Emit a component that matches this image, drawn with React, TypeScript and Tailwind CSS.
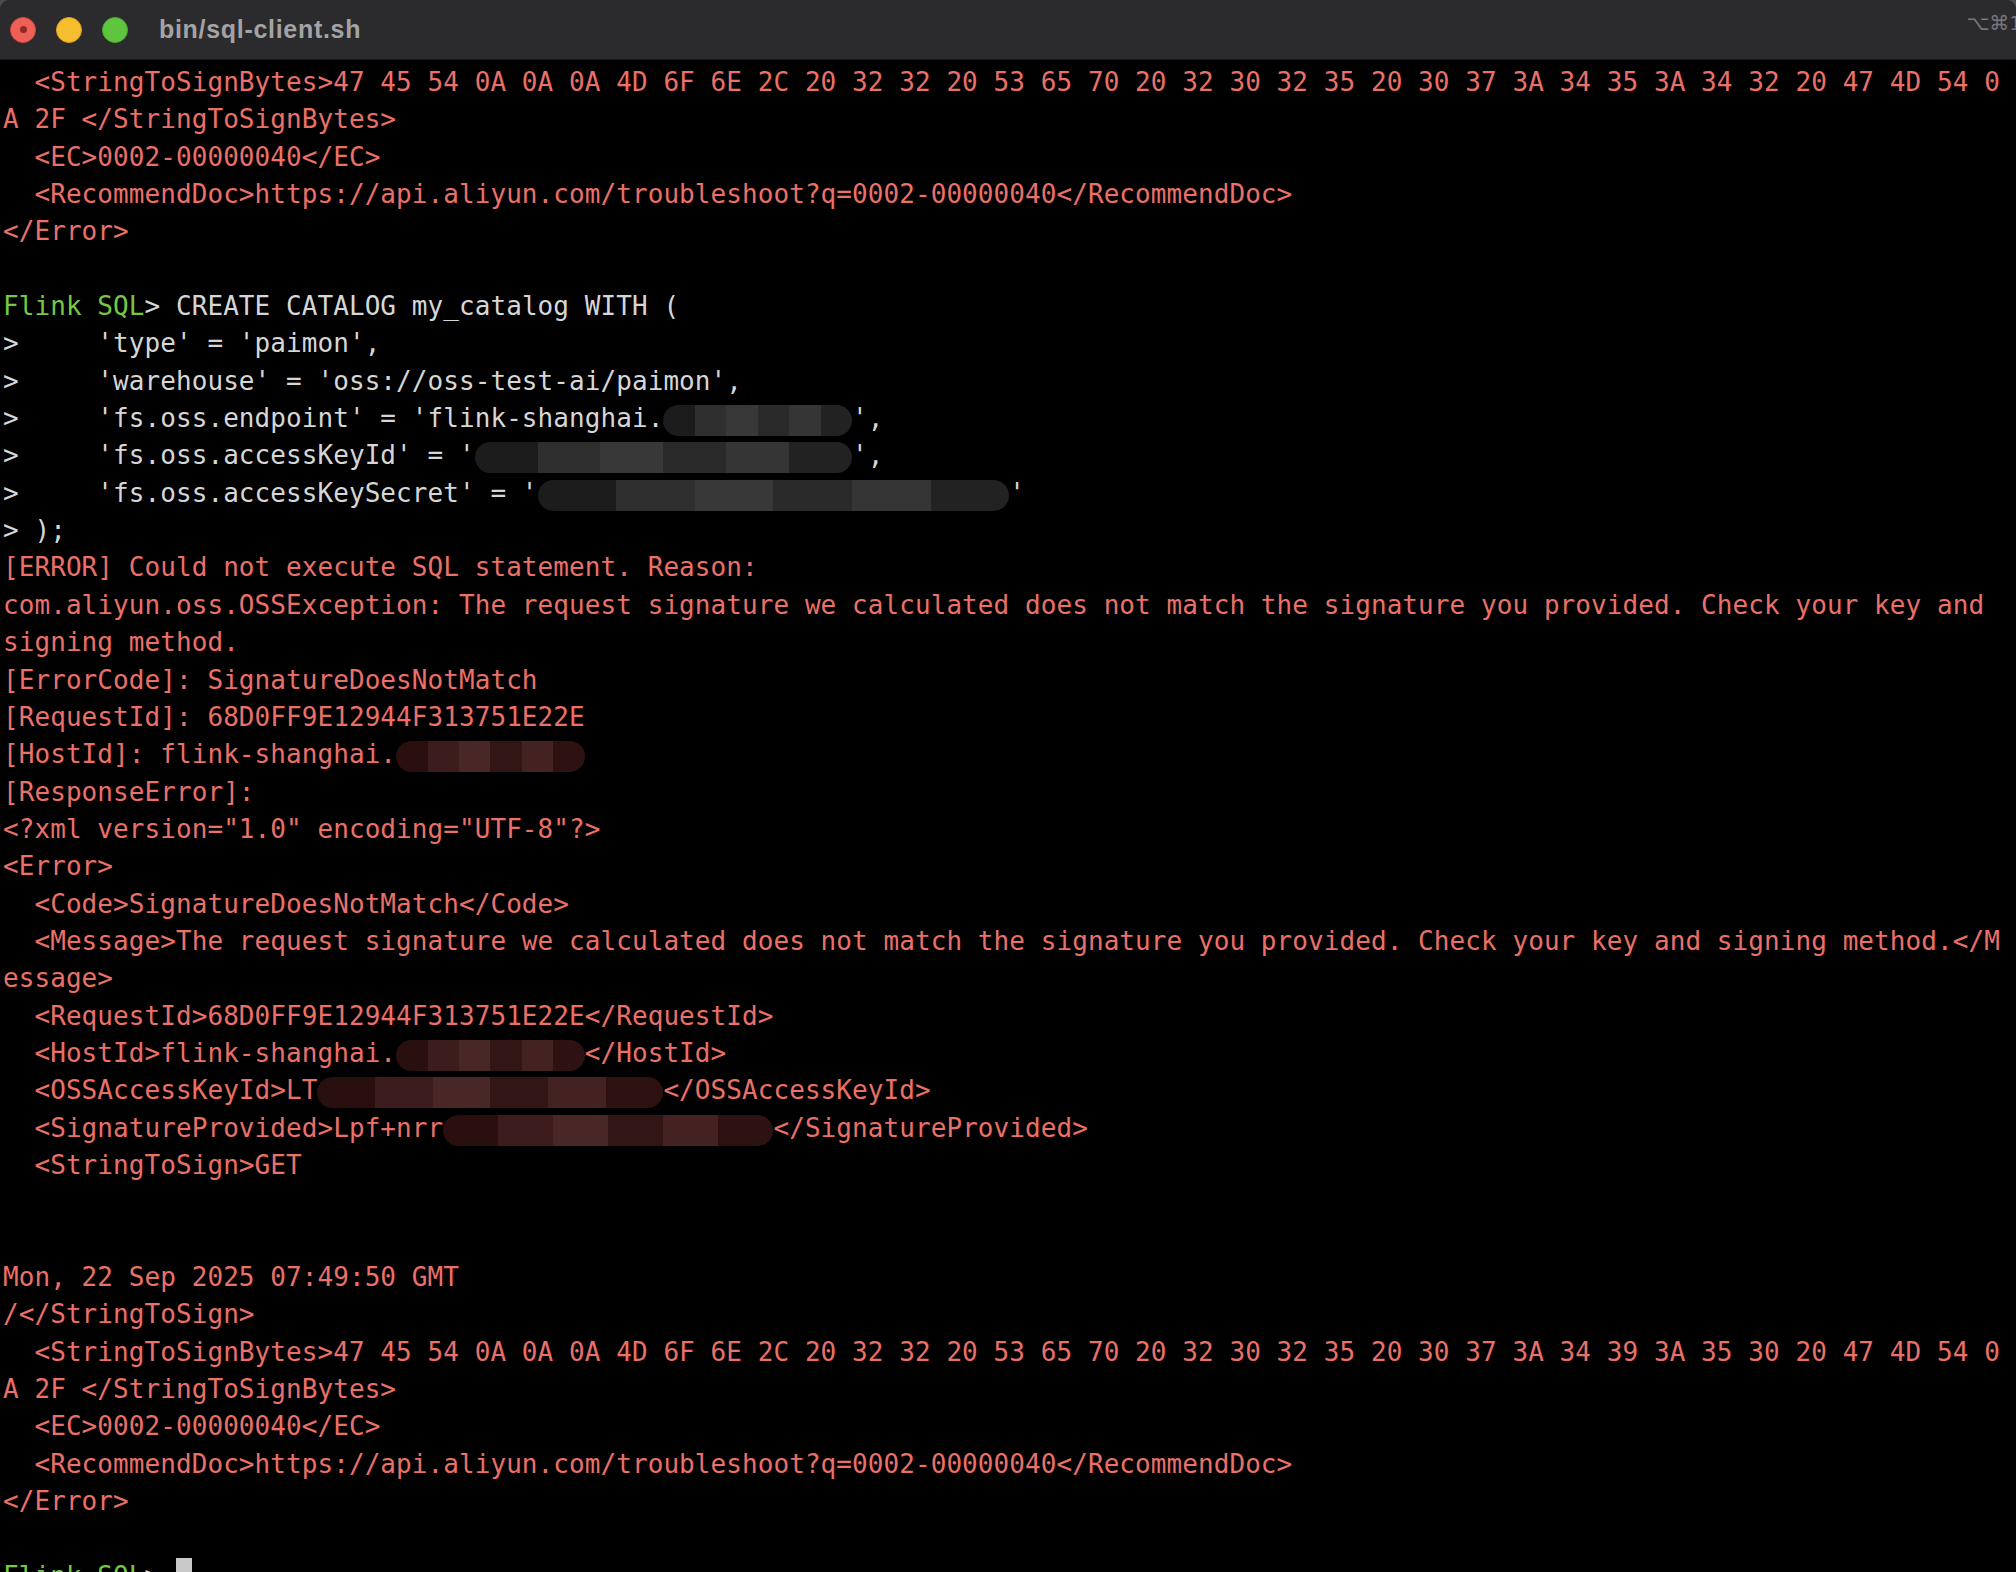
import React from "react";

type Tone = "r" | "g" | "w";
type Seg = { t: string; c?: Tone } | { blob: number; tone: "gray" | "red" };

const toneClass: Record<Tone, string> = {
  r: "text-[#ea7068]",
  g: "text-[#74c941]",
  w: "text-[#d6d6d6]",
};

const grayShades = ["bg-[#1c1c1c]", "bg-[#2f2f2f]", "bg-[#383838]", "bg-[#2a2a2a]", "bg-[#353535]", "bg-[#222]"];
const redShades = ["bg-[#2a0f0f]", "bg-[#3c1c1c]", "bg-[#4a2727]", "bg-[#321616]", "bg-[#452222]", "bg-[#2e1212]"];

// redacted part of a line, drawn like the smudge in the screenshot
function Blob({ n, tone }: { n: number; tone: "gray" | "red" }) {
  const shades = tone === "gray" ? grayShades : redShades;
  return (
    <span className="relative inline-block align-top h-[37.35px]" style={{ width: `calc(${n}ch + ${n * 0.07}px)` }}>
      <span className="absolute inset-x-0 top-[5px] h-[31px] rounded-full overflow-hidden flex">
        {shades.map((s, i) => (
          <span key={i} className={`flex-1 ${s}`} />
        ))}
      </span>
    </span>
  );
}

const r = (t: string): Seg[] => [{ t, c: "r" }];
const w = (t: string): Seg[] => [{ t, c: "w" }];

const lines: Seg[][] = [
  r("  <StringToSignBytes>47 45 54 0A 0A 0A 4D 6F 6E 2C 20 32 32 20 53 65 70 20 32 30 32 35 20 30 37 3A 34 35 3A 34 32 20 47 4D 54 0"),
  r("A 2F </StringToSignBytes>"),
  r("  <EC>0002-00000040</EC>"),
  r("  <RecommendDoc>https://api.aliyun.com/troubleshoot?q=0002-00000040</RecommendDoc>"),
  r("</Error>"),
  [],
  [
    { t: "Flink SQL", c: "g" },
    { t: "> CREATE CATALOG my_catalog WITH (", c: "w" },
  ],
  w(">     'type' = 'paimon',"),
  w(">     'warehouse' = 'oss://oss-test-ai/paimon',"),
  [{ t: ">     'fs.oss.endpoint' = 'flink-shanghai.", c: "w" }, { blob: 12, tone: "gray" }, { t: "',", c: "w" }],
  [{ t: ">     'fs.oss.accessKeyId' = '", c: "w" }, { blob: 24, tone: "gray" }, { t: "',", c: "w" }],
  [{ t: ">     'fs.oss.accessKeySecret' = '", c: "w" }, { blob: 30, tone: "gray" }, { t: "'", c: "w" }],
  w("> );"),
  r("[ERROR] Could not execute SQL statement. Reason:"),
  r("com.aliyun.oss.OSSException: The request signature we calculated does not match the signature you provided. Check your key and"),
  r("signing method."),
  r("[ErrorCode]: SignatureDoesNotMatch"),
  r("[RequestId]: 68D0FF9E12944F313751E22E"),
  [{ t: "[HostId]: flink-shanghai.", c: "r" }, { blob: 12, tone: "red" }],
  r("[ResponseError]:"),
  r('<?xml version="1.0" encoding="UTF-8"?>'),
  r("<Error>"),
  r("  <Code>SignatureDoesNotMatch</Code>"),
  r("  <Message>The request signature we calculated does not match the signature you provided. Check your key and signing method.</M"),
  r("essage>"),
  r("  <RequestId>68D0FF9E12944F313751E22E</RequestId>"),
  [{ t: "  <HostId>flink-shanghai.", c: "r" }, { blob: 12, tone: "red" }, { t: "</HostId>", c: "r" }],
  [{ t: "  <OSSAccessKeyId>LT", c: "r" }, { blob: 22, tone: "red" }, { t: "</OSSAccessKeyId>", c: "r" }],
  [{ t: "  <SignatureProvided>Lpf+nrr", c: "r" }, { blob: 21, tone: "red" }, { t: "</SignatureProvided>", c: "r" }],
  r("  <StringToSign>GET"),
  [],
  [],
  r("Mon, 22 Sep 2025 07:49:50 GMT"),
  r("/</StringToSign>"),
  r("  <StringToSignBytes>47 45 54 0A 0A 0A 4D 6F 6E 2C 20 32 32 20 53 65 70 20 32 30 32 35 20 30 37 3A 34 39 3A 35 30 20 47 4D 54 0"),
  r("A 2F </StringToSignBytes>"),
  r("  <EC>0002-00000040</EC>"),
  r("  <RecommendDoc>https://api.aliyun.com/troubleshoot?q=0002-00000040</RecommendDoc>"),
  r("</Error>"),
  [],
];

function Line({ segs }: { segs: Seg[] }) {
  return (
    <div className="h-[37.35px] leading-[37.35px] whitespace-pre">
      {segs.length === 0 ? " " : null}
      {segs.map((s, i) =>
        "blob" in s ? (
          <Blob key={i} n={s.blob} tone={s.tone} />
        ) : (
          <span key={i} className={toneClass[s.c ?? "w"]}>
            {s.t}
          </span>
        )
      )}
    </div>
  );
}

export default function App() {
  return (
    <div className="w-[2016px] h-[1572px] overflow-hidden bg-[#4a4a4c]">
      <div className="flex flex-col h-full rounded-t-[10px] overflow-hidden bg-black">
        {/* title bar */}
        <div className="h-[60px] shrink-0 bg-[#2b2b2d] border-b border-[#1a1a1a] flex items-center pl-[10px] font-['Liberation_Sans',Arial,sans-serif]">
          <div className="flex items-center gap-[20px]">
            <span className="w-[26px] h-[26px] rounded-full bg-[#ee5f57] border border-[#d2483f] flex items-center justify-center">
              <span className="w-[7px] h-[7px] rounded-full bg-[#8f2a24]" />
            </span>
            <span className="w-[26px] h-[26px] rounded-full bg-[#f6be2f] border border-[#d9a21c]" />
            <span className="w-[26px] h-[26px] rounded-full bg-[#5fc53f] border border-[#4aa92e]" />
          </div>
          <span className="ml-[31px] text-[25px] font-bold text-[#a3a3a5] tracking-[0.7px]">bin/sql-client.sh</span>
          <span className="ml-auto mr-[-6px] -mt-[14px] text-[20px] text-[#77777a] font-['DejaVu_Sans',sans-serif]">⌥⌘1</span>
        </div>
        {/* terminal output */}
        <div className="flex-1 pt-[4px] pl-[3px] font-['DejaVu_Sans_Mono','Liberation_Mono',monospace] text-[26px] tracking-[0.07px] text-[#d6d6d6]">
          {lines.map((segs, i) => (
            <Line key={i} segs={segs} />
          ))}
          <div className="h-[37.35px] leading-[37.35px] whitespace-pre flex">
            <span className={toneClass.g}>Flink SQL</span>
            <span className={toneClass.w}>{"> "}</span>
            <span className="inline-block w-[16px] h-[37.35px] bg-[#c9c9c9]" />
          </div>
        </div>
      </div>
    </div>
  );
}
